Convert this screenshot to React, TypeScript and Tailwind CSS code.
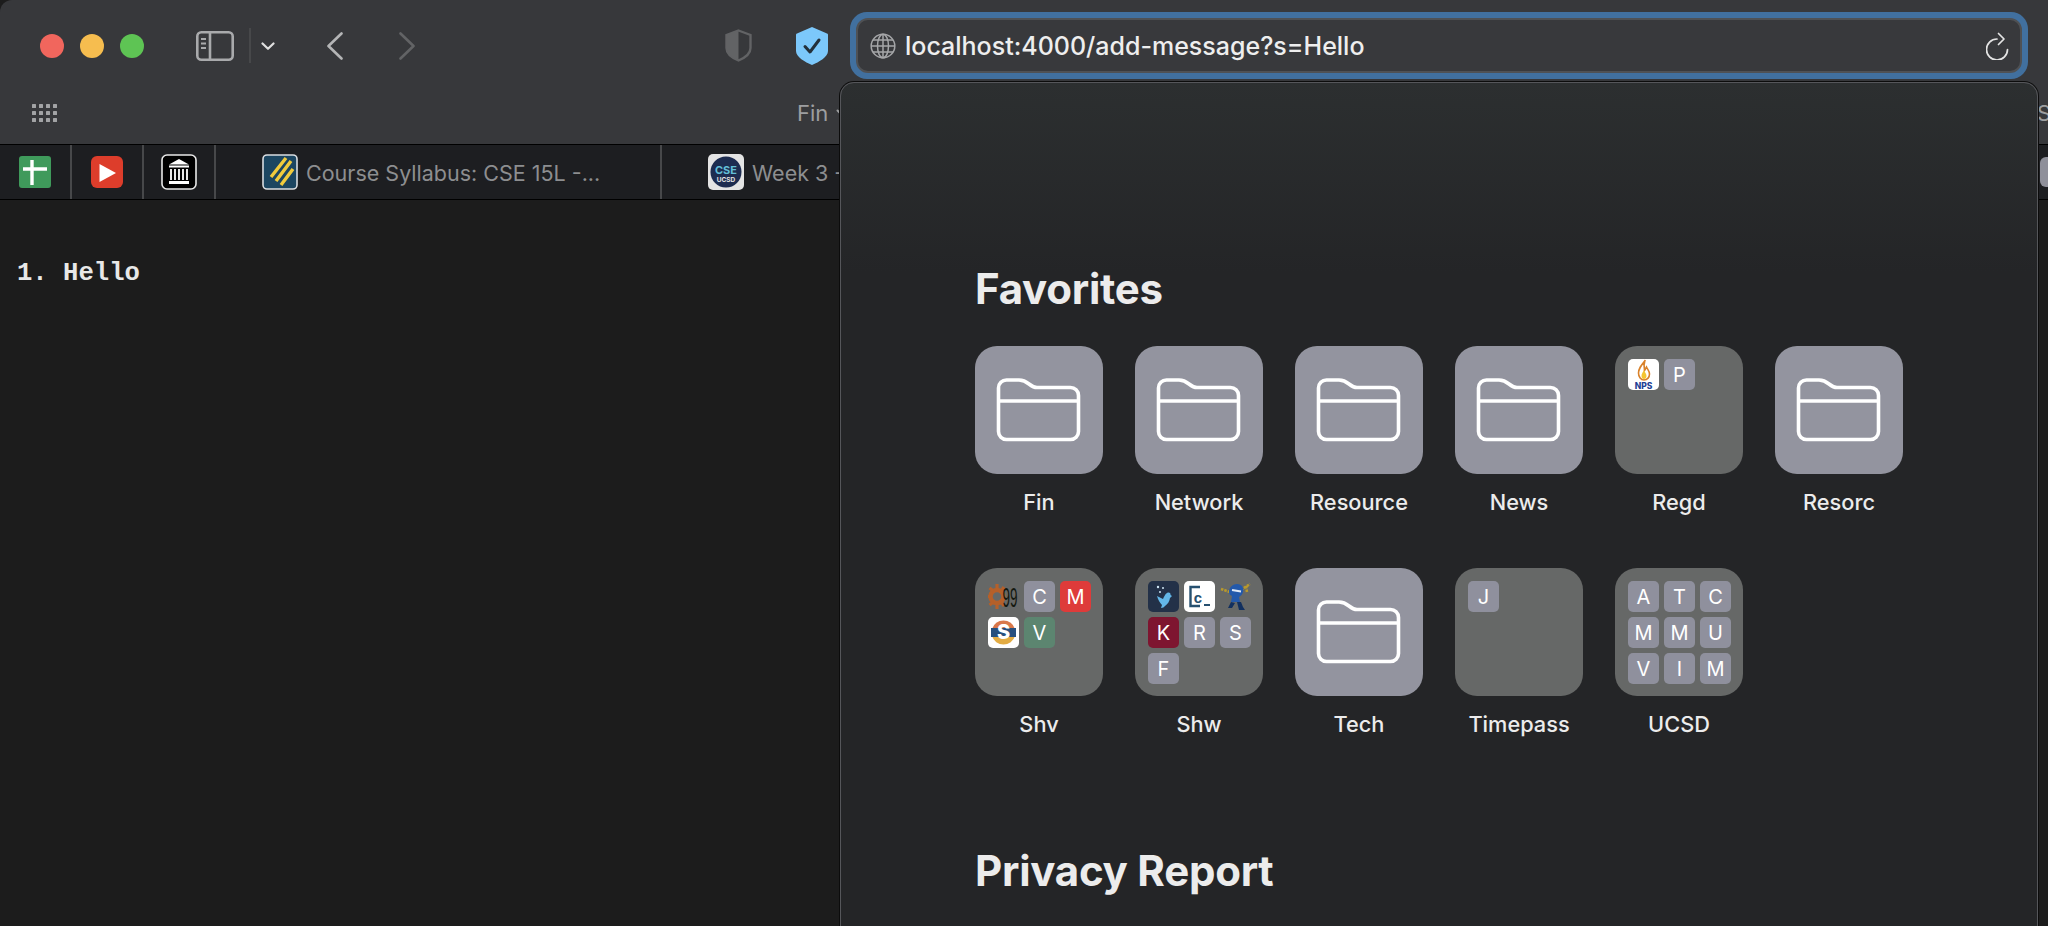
import React from "react";

const inter = "font-['Inter','Noto_Sans',sans-serif]";

function FolderGlyph() {
  return (
    <svg viewBox="0 0 128 128" className="w-32 h-32" fill="none" stroke="#ffffff" strokeWidth="3.6" strokeLinejoin="round">
      <path d="M23.5 85.5V42a8 8 0 0 1 8-8H44c5 0 7 1.5 10 4c2.5 2 4.5 3.5 8 3.5H95.5a8 8 0 0 1 8 8V85.5a8 8 0 0 1-8 8H31.5a8 8 0 0 1-8-8Z" />
      <path d="M23.5 55H103.5" />
    </svg>
  );
}

function Mini({ bg = "bg-[#8f909d]", children }: { bg?: string; children?: React.ReactNode }) {
  return (
    <div className={`w-[31px] h-[31px] rounded-[5px] flex items-center justify-center text-white text-[20px] leading-none overflow-hidden ${bg}`}>
      {children}
    </div>
  );
}

const Nps = () => (
  <Mini bg="bg-white">
    <svg viewBox="0 0 31 31" className="w-[31px] h-[31px]">
      <path d="M17 1.500c-4 5-6.500 8-6.500 12.500c0 4 2.500 7 5.500 7c3.500 0 5.500-3 5.500-6c0-3-2-4.500-3-7c-1 1.500-1 2.500-2 3.500c-.8-3.500-.8-6.500.5-10.500Z" fill="none" stroke="#d9822b" strokeWidth="1.600" />
      <path d="M16 11c-1.500 2.500-2.500 4-2.500 6c0 2 1 3 2.500 3c1.500 0 2.500-1 2.500-3c0-2-1.500-3.500-2.500-6Z" fill="#f5c531" />
      <text x="15.500" y="30" textAnchor="middle" fontSize="8.500" fontWeight="800" fill="#1f3f94" fontFamily="Inter, sans-serif">NPS</text>
    </svg>
  </Mini>
);
const C99 = () => (
  <Mini bg="bg-transparent">
    <svg viewBox="0 0 31 31" className="w-[31px] h-[31px]">
      <circle cx="9" cy="15.500" r="6.500" fill="none" stroke="#b5602a" strokeWidth="4.500" />
      <path d="M9 3v5M9 23v5M0 15.500h3M1.500 7l4 3M1.500 24l4-3M16 6l-2 3M16 25l-2-3" stroke="#b5602a" strokeWidth="3.200" />
      <text x="14.500" y="26" fontSize="27" fill="#14180f" fontFamily="Liberation Sans, sans-serif" textLength="15" lengthAdjust="spacingAndGlyphs">99</text>
    </svg>
  </Mini>
);
const Sicon = () => (
  <Mini bg="bg-white">
    <svg viewBox="0 0 31 31" className="w-[31px] h-[31px]">
      <path d="M4 12a12 12 0 0 1 23 0Z" fill="#d9784a" />
      <path d="M4 19a12 12 0 0 0 23 0Z" fill="#e3ac43" />
      <rect x="3" y="11" width="25" height="9" fill="#27507e" />
      <text x="15.500" y="22" textAnchor="middle" fontSize="20" fontWeight="800" fill="#ffffff" fontFamily="Inter, sans-serif">S</text>
    </svg>
  </Mini>
);
const Bird = () => (
  <Mini bg="bg-[#233148]">
    <svg viewBox="0 0 31 31" className="w-[31px] h-[31px]">
      <path d="M9 15l6 3c1-2 2-5 4-6c2-1 4 0 3.500 2l1.500 1l-2 2c-.5 3-2 6-5 8c-1 1-2 2-4 2l1-3c-2-2-4-5-5-9Z" fill="#63b7e8" />
      <circle cx="10" cy="6" r="1.200" fill="#cfe6f5" />
      <circle cx="15" cy="7" r="1" fill="#cfe6f5" />
      <circle cx="12" cy="11" r="1" fill="#cfe6f5" />
    </svg>
  </Mini>
);
const CTerm = () => (
  <Mini bg="bg-white">
    <svg viewBox="0 0 31 31" className="w-[31px] h-[31px]">
      <path d="M16 6H6.500v19H16" fill="none" stroke="#26506f" strokeWidth="2.400" />
      <text x="9.500" y="22" fontSize="15" fontWeight="700" fill="#26506f" fontFamily="Liberation Mono, monospace">c</text>
      <rect x="20" y="23" width="6" height="2" fill="#26506f" />
    </svg>
  </Mini>
);
const Mascot = () => (
  <Mini bg="bg-transparent">
    <svg viewBox="0 0 31 31" className="w-[31px] h-[31px]">
      <path d="M1 8l9 3M21 9l9-6M26 5l1 6" stroke="#b8992c" strokeWidth="2.600" strokeDasharray="2.500 1" />
      <path d="M9 11c0-5 4-8 8-8c5 0 7 4 6 8c-.5 2-2 4-4 5l1 5h-9l1-6c-2-1-3-2-3-4Z" fill="#2359ab" />
      <path d="M12 9l9 1.500" stroke="#dfe8f5" strokeWidth="2" />
      <path d="M11 21l-3 6h4l3-5ZM17 21l2 8h6l-2-3l-2-5Z" fill="#12305f" />
    </svg>
  </Mini>
);

type Tile = { name: string; minis?: React.ReactNode[] };
const L = (c: string, i: number) => <Mini key={c + i}>{c}</Mini>;
const tiles: Tile[] = [
  { name: "Fin" },
  { name: "Network" },
  { name: "Resource" },
  { name: "News" },
  { name: "Regd", minis: [<Nps key="n" />, L("P", 1)] },
  { name: "Resorc" },
  { name: "Shv", minis: [<C99 key="c" />, L("C", 1), <Mini key="m" bg="bg-[#de3b3a]">M</Mini>, <Sicon key="s" />, <Mini key="v" bg="bg-[#5c8570]">V</Mini>] },
  { name: "Shw", minis: [<Bird key="b" />, <CTerm key="t" />, <Mascot key="ms" />, <Mini key="k" bg="bg-[#7e1530]">K</Mini>, L("R", 1), L("S", 2), L("F", 3)] },
  { name: "Tech" },
  { name: "Timepass", minis: [L("J", 1)] },
  { name: "UCSD", minis: ["A", "T", "C", "M", "M", "U", "V", "I", "M"].map(L) },
];

function FavTile({ t }: { t: Tile }) {
  return (
    <div className="h-[222px] flex flex-col items-center">
      {t.minis ? (
        <div className="w-32 h-32 rounded-[22px] bg-[#666867] p-[13px] grid grid-cols-[repeat(3,31px)] auto-rows-[31px] gap-[5px] content-start">
          {t.minis}
        </div>
      ) : (
        <div className="w-32 h-32 rounded-[22px] bg-[#93949f]">
          <FolderGlyph />
        </div>
      )}
      <div className="mt-[13px] text-[21.75px] leading-[30px] font-medium text-[#ececec]">{t.name}</div>
    </div>
  );
}

function Divider() {
  return <div className="w-[2px] self-stretch bg-[#47484a]" />;
}

export default function App() {
  return (
    <div className={`relative w-[2048px] h-[926px] overflow-hidden bg-[#1c1c1c] ${inter}`}>
      {/* toolbar */}
      <div className="h-[144px] bg-[#37383b] rounded-tl-[12px] flex flex-col">
        <div className="h-[91px] flex items-center pl-10">
          <div className="flex gap-4">
            <div className="w-6 h-6 rounded-full bg-[#f1665d]" />
            <div className="w-6 h-6 rounded-full bg-[#f6bd4f]" />
            <div className="w-6 h-6 rounded-full bg-[#5ec454]" />
          </div>
          <svg viewBox="0 0 38 30" className="w-[38px] h-[30px] ml-[52px]" fill="none" stroke="#a9aaac" strokeWidth="2.600">
            <rect x="1.300" y="1.300" width="35.400" height="27.400" rx="4" />
            <path d="M14 1.300v27.400" />
            <path d="M5 8h5M5 12.500h5M5 17h5" strokeWidth="2.200" />
          </svg>
          <div className="w-[2px] h-[35px] bg-[#47484a] ml-[15px]" />
          <svg viewBox="0 0 14 8" className="w-[14px] h-2 ml-[10px]" fill="none" stroke="#e0e0e0" strokeWidth="2.200" strokeLinecap="round" strokeLinejoin="round">
            <path d="M1.500 1.500L7 6.800l5.500-5.300" />
          </svg>
          <svg viewBox="0 0 16 28" className="w-4 h-7 ml-[52px]" fill="none" stroke="#b4b5b6" strokeWidth="2.600" strokeLinecap="round" strokeLinejoin="round">
            <path d="M14.500 1.500L1.500 14l13 12.500" />
          </svg>
          <svg viewBox="0 0 16 28" className="w-4 h-7 ml-14" fill="none" stroke="#626365" strokeWidth="2.600" strokeLinecap="round" strokeLinejoin="round">
            <path d="M1.500 1.500L14.500 14l-13 12.500" />
          </svg>
          <svg viewBox="0 0 27 33" className="w-[27px] h-[33px] ml-[310px]">
            <path d="M13.500 1.500L25.500 6V19c0 6-6 10-12 12.500C7.500 29 1.500 25 1.500 19V6Z" fill="none" stroke="#626365" strokeWidth="2.400" />
            <path d="M13.500 1.500V31.500C7.500 29 1.500 25 1.500 19V6Z" fill="#626365" />
          </svg>
          <svg viewBox="0 0 32 38" className="w-8 h-[38px] ml-[44px]">
            <path d="M16 0L31 6.500c1 .4 1 1 1 2V24c0 6-9 11-16 14C9 35 0 30 0 24V8.500c0-1 0-1.600 1-2Z" fill="#7cc8fb" />
            <path d="M9 19.500l5 5.500l9-12" fill="none" stroke="#23303b" strokeWidth="3" strokeLinecap="round" strokeLinejoin="round" />
          </svg>
          <div className="ml-[22px] w-[1178px] h-[67px] rounded-[17px] bg-[#41709f] p-[6px] flex">
            <div className="flex-1 rounded-[12px] bg-[#38393c] border-2 border-[#4f5154] flex items-center pl-[12px] pr-[10px]">
              <svg viewBox="0 0 26 26" className="w-[26px] h-[26px]" fill="none" stroke="#a5a6a8" strokeWidth="1.500">
                <circle cx="13" cy="13" r="11.800" />
                <ellipse cx="13" cy="13" rx="5.500" ry="11.800" />
                <path d="M13 1.200V24.800M1.200 13H24.800M3 7h20M3 19h20" />
              </svg>
              <span className="ml-[9px] mt-[2px] text-[25px] leading-none font-medium text-[#eeeeee] whitespace-nowrap">localhost:4000/add-message?s=Hello</span>
              <svg viewBox="0 0 24 28" className="w-6 h-7 ml-auto" fill="none" stroke="#e4e4e4" strokeWidth="1.700" strokeLinecap="round" strokeLinejoin="round">
                <path d="M11 7A10.500 10.500 0 1 0 21.500 17.500" />
                <path d="M12.500 1.500L18 7L12.500 12.500" />
              </svg>
            </div>
          </div>
        </div>
        <div className="flex-1 flex items-center pl-8 pb-[9px] relative overflow-hidden">
          <svg viewBox="0 0 25 18" className="w-[25px] h-[18px]" fill="#a2a3a5">
            {[0, 7, 14].map((y) =>
              [0, 7, 14, 21].map((x) => <rect key={`${x}-${y}`} x={x} y={y} width="4" height="4" rx="0.500" />)
            )}
          </svg>
          <span className="ml-[740px] text-[22px] leading-none text-[#9d9ea0]">Fin</span>
          <svg viewBox="0 0 12 8" className="w-3 h-2 ml-[8px]" fill="none" stroke="#9d9ea0" strokeWidth="2" strokeLinecap="round">
            <path d="M1.500 1.500L6 6l4.500-4.500" />
          </svg>
          <span className="ml-auto -mr-[3px] text-[22px] leading-none text-[#9d9ea0]">S</span>
        </div>
      </div>

      {/* tab bar */}
      <div className="h-[56px] bg-[#1d1e21] border-y border-black flex items-center overflow-hidden">
        <div className="w-[70px] h-full flex items-center pl-[19px]">
          <svg viewBox="0 0 32 32" className="w-8 h-8">
            <rect width="32" height="32" rx="3" fill="#3f9a5b" />
            <path d="M13 4v25M4 13h24" stroke="#fff" strokeWidth="3.400" />
          </svg>
        </div>
        <Divider />
        <div className="w-[70px] h-full flex items-center justify-center">
          <svg viewBox="0 0 32 32" className="w-8 h-8">
            <rect width="32" height="32" rx="6" fill="#dd3d2b" />
            <path d="M8.500 8L25 17L8.500 26Z" fill="#ffffff" />
          </svg>
        </div>
        <Divider />
        <div className="w-[70px] h-full flex items-center justify-center">
          <svg viewBox="0 0 36 36" className="w-9 h-9">
            <rect x="1" y="1" width="34" height="34" rx="5" fill="#000" stroke="#e8e8e8" strokeWidth="1.600" />
            <path d="M18 5L28 10.500H8Z" fill="#fff" />
            <rect x="8" y="11.500" width="20" height="2" fill="#fff" />
            <path d="M10 15v11M14 15v11M18 15v11M22 15v11M26 15v11" stroke="#fff" strokeWidth="1.800" />
            <rect x="8" y="27" width="20" height="3" fill="#fff" />
          </svg>
        </div>
        <Divider />
        <div className="w-[444px] h-full flex items-center pl-[46px]">
          <svg viewBox="0 0 36 36" className="w-9 h-9 shrink-0">
            <rect x="1" y="1" width="34" height="34" rx="4" fill="#1c4661" stroke="#d9dde0" strokeWidth="1.600" />
            <path d="M9 23L24 4M14 27L29 7M19 31L31 15" stroke="#f1cb3c" strokeWidth="3.400" />
          </svg>
          <span className="ml-2 mt-[3px] text-[21.5px] leading-none text-[#8d8e90] whitespace-nowrap">Course Syllabus: CSE 15L -...</span>
        </div>
        <Divider />
        <div className="flex items-center pl-[46px]">
          <svg viewBox="0 0 36 36" className="w-9 h-9 shrink-0">
            <rect width="36" height="36" rx="5" fill="#e4e4e4" />
            <circle cx="18" cy="18" r="15.500" fill="#1d2c50" />
            <text x="18" y="20" textAnchor="middle" fontSize="11" fontWeight="700" fill="#63bfd8" fontFamily="Inter, sans-serif">CSE</text>
            <text x="18" y="28" textAnchor="middle" fontSize="6.500" fontWeight="700" fill="#e6e6e6" fontFamily="Inter, sans-serif">UCSD</text>
          </svg>
          <span className="ml-2 mt-[3px] text-[21.5px] leading-none text-[#8d8e90] whitespace-nowrap">Week 3 -</span>
        </div>
        <div className="ml-auto -mr-[14px] w-[22px] h-[30px] rounded-[6px] bg-[#8f909a]" />
      </div>

      {/* page */}
      <div className="pt-[56px] pl-[17px] font-['Liberation_Mono',monospace] font-bold text-[25.6px] leading-[36px] text-[#e8e8e8]">1. Hello</div>

      {/* start page popover */}
      <div className="absolute left-[840px] top-[82px] w-[1198px] h-[860px] rounded-t-[14px] border border-[#55565a] shadow-[0_0_0_1px_#0c0c0c] bg-[linear-gradient(180deg,#2c2f30_0%,#242527_22%,#242527_100%)] pl-[134px] pt-[182px]">
        <h2 className="text-[42px] leading-[48px] font-bold text-[#ececec] tracking-[-0.25px] mb-[33px]">Favorites</h2>
        <div className="grid grid-cols-[repeat(6,128px)] gap-x-8">
          {tiles.map((t) => (
            <FavTile key={t.name} t={t} />
          ))}
        </div>
        <h2 className="mt-[57px] text-[42px] leading-[48px] font-bold text-[#ececec] tracking-[-0.25px]">Privacy Report</h2>
      </div>
    </div>
  );
}
